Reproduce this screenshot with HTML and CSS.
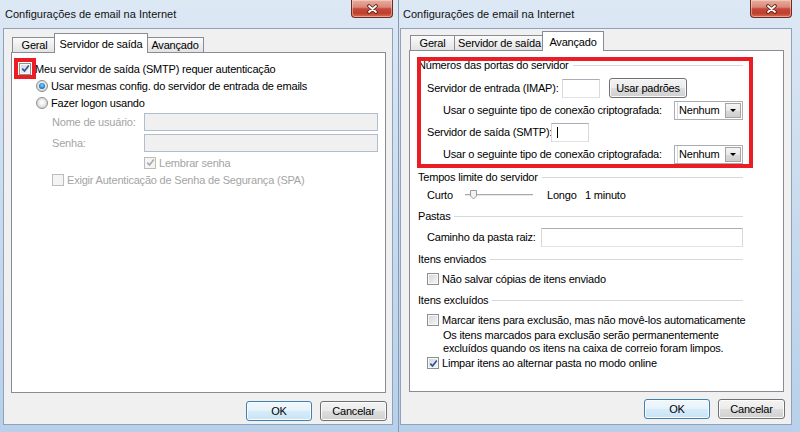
FILE: index.html
```html
<!DOCTYPE html>
<html>
<head>
    <meta charset="UTF-8">
    <title>Configurações de email na Internet</title>
    <link rel="stylesheet" href="styles.css">
</head>
<body>
<div class="desk">

    <!-- janela 1: aba Servidor de saída -->
    <div class="win win-a">
        <div class="titlebar">
            <span class="ttl">Configurações de email na Internet</span>
            <span class="close">
                <svg width="13" height="10" viewBox="0 0 13 10"><path d="M3 2 L10 8 M10 2 L3 8" stroke="#5a231c" stroke-width="3.6" stroke-linecap="round"/><path d="M3 2 L10 8 M10 2 L3 8" stroke="#fff" stroke-width="1.8" stroke-linecap="round"/></svg>
            </span>
        </div>
        <div class="win-body">
            <div class="tabs">
                <span class="tab t-geral">Geral</span>
                <span class="tab t-saida on">Servidor de saída</span>
                <span class="tab t-avanc">Avançado</span>
            </div>
            <div class="panel panel-out">
                <div class="opt">
                    <span class="chk chk-main">
                        <svg width="9" height="9" viewBox="0 0 9 9"><path d="M1.3 4.6 L3.5 7 L7.8 1.4" stroke="#2e4f9e" stroke-width="1.6" fill="none"/></svg>
                        <span class="mark"></span>
                    </span>
                    Meu servidor de saída (SMTP) requer autenticação
                </div>
                <div class="sub">
                    <div class="opt"><span class="radio on"></span>Usar mesmas config. do servidor de entrada de emails</div>
                    <div class="opt"><span class="radio"></span>Fazer logon usando</div>
                    <div class="login">
                        <div class="field"><span class="field-lbl">Nome de usuário:</span><span class="txt txt-off"></span></div>
                        <div class="field"><span class="field-lbl">Senha:</span><span class="txt txt-off"></span></div>
                        <div class="opt remember">
                            <span class="chk chk-off">
                                <svg width="9" height="9" viewBox="0 0 9 9"><path d="M1.3 4.6 L3.5 7 L7.8 1.4" stroke="#a9a9a9" stroke-width="1.6" fill="none"/></svg>
                            </span>
                            Lembrar senha
                        </div>
                        <div class="opt"><span class="chk chk-off"></span>Exigir Autenticação de Senha de Segurança (SPA)</div>
                    </div>
                </div>
            </div>
            <div class="actions">
                <span class="btn btn-ok">OK</span>
                <span class="btn btn-cancel">Cancelar</span>
            </div>
        </div>
    </div>

    <!-- janela 2: aba Avançado -->
    <div class="win win-b">
        <div class="titlebar">
            <span class="ttl">Configurações de email na Internet</span>
            <span class="close">
                <svg width="13" height="10" viewBox="0 0 13 10"><path d="M3 2 L10 8 M10 2 L3 8" stroke="#5a231c" stroke-width="3.6" stroke-linecap="round"/><path d="M3 2 L10 8 M10 2 L3 8" stroke="#fff" stroke-width="1.8" stroke-linecap="round"/></svg>
            </span>
        </div>
        <div class="win-body">
            <div class="tabs">
                <span class="tab t-geral">Geral</span>
                <span class="tab t-saida">Servidor de saída</span>
                <span class="tab t-avanc on">Avançado</span>
            </div>
            <div class="panel panel-adv">

                <div class="grp grp-ports">
                    <div class="mark"></div>
                    <div class="grp-hd">Números das portas do servidor</div>
                    <div class="grp-body">
                        <div class="fld">
                            <span class="w-imap">Servidor de entrada (IMAP):</span>
                            <span class="txt port"></span>
                            <span class="btn btn-def">Usar padrões</span>
                        </div>
                        <div class="fld indent">
                            <span>Usar o seguinte tipo de conexão criptografada:</span>
                            <span class="sel"><span class="sel-txt">Nenhum</span><span class="sel-btn"><i class="arrow"></i></span></span>
                        </div>
                        <div class="fld">
                            <span class="w-smtp">Servidor de saída (SMTP):</span>
                            <span class="txt port"><span class="caret"></span></span>
                        </div>
                        <div class="fld indent">
                            <span>Usar o seguinte tipo de conexão criptografada:</span>
                            <span class="sel"><span class="sel-txt">Nenhum</span><span class="sel-btn"><i class="arrow"></i></span></span>
                        </div>
                    </div>
                </div>

                <div class="grp grp-time">
                    <div class="grp-hd">Tempos limite do servidor</div>
                    <div class="grp-body">
                        <div class="fld slide">
                            <span class="w-short">Curto</span>
                            <svg class="track" width="70" height="12" viewBox="0 0 70 12">
                                <rect x="0" y="5" width="68" height="1" fill="#a9a9a9"/>
                                <rect x="0" y="6" width="68" height="1" fill="#e9e9e9"/>
                                <path d="M5.5 1.5 h6 v5.5 l-3 3 l-3 -3 z" fill="#f3f3f3" stroke="#9a9a9a"/>
                            </svg>
                            <span class="w-short">Longo</span>
                            <span>1 minuto</span>
                        </div>
                    </div>
                </div>

                <div class="grp">
                    <div class="grp-hd">Pastas</div>
                    <div class="grp-body">
                        <div class="fld">
                            <span class="w-root">Caminho da pasta raiz:</span>
                            <span class="txt grow"></span>
                        </div>
                    </div>
                </div>

                <div class="grp">
                    <div class="grp-hd">Itens enviados</div>
                    <div class="grp-body">
                        <div class="opt chk-row"><span class="chk"></span>Não salvar cópias de itens enviado</div>
                    </div>
                </div>

                <div class="grp">
                    <div class="grp-hd">Itens excluídos</div>
                    <div class="grp-body">
                        <div class="opt chk-row"><span class="chk"></span>Marcar itens para exclusão, mas não movê-los automaticamente</div>
                        <p class="desc">Os itens marcados para exclusão serão permanentemente<br>excluídos quando os itens na caixa de correio foram limpos.</p>
                        <div class="opt chk-row">
                            <span class="chk">
                                <svg width="9" height="9" viewBox="0 0 9 9"><path d="M1.3 4.6 L3.5 7 L7.8 1.4" stroke="#2e4f9e" stroke-width="1.6" fill="none"/></svg>
                            </span>
                            Limpar itens ao alternar pasta no modo online
                        </div>
                    </div>
                </div>

            </div>
            <div class="actions">
                <span class="btn btn-ok">OK</span>
                <span class="btn btn-cancel">Cancelar</span>
            </div>
        </div>
    </div>

</div>
</body>
</html>
```

FILE: styles.css
```css
* {box-sizing: border-box;}
body {margin: 0; width: 800px; height: 432px; overflow: hidden; background: linear-gradient(#dde8f5, #cadcee 45%, #b8d0ea); font-family: "Liberation Sans", Arial, sans-serif; font-size: 11px; color: #000; letter-spacing: -0.2px;}
.desk {display: flex; height: 432px;}

/* frame of each window */
.win {display: flex; flex-direction: column; height: 432px; padding-bottom: 7px;}
.win-a {width: 398px; padding-left: 3px; padding-right: 5px;}
.win-b {width: 402px; padding-left: 1px; padding-right: 8px; border-left: 1px solid #8799b0;}
.titlebar {height: 28px; display: flex; justify-content: space-between; align-items: flex-start; padding-left: 2px;}
.win-b .titlebar {padding-left: 3px;}
.ttl {line-height: 28px; letter-spacing: 0; color: #111;}
.close {width: 42px; height: 18px; display: flex; align-items: center; justify-content: center; border: 1px solid #6d2b22; border-top: 0; border-radius: 0 0 4px 4px; background: linear-gradient(#e9ae9f, #d8887a 42%, #c5483a 52%, #c03f2e 78%, #d6704f); box-shadow: inset 0 0 0 1px rgba(255, 232, 222, 0.45);}

.win-body {flex: 1; display: flex; flex-direction: column; background: #f0f0f0; border: 1px solid #8ea3bb;}
.win-a .win-body {padding: 4px 6px 3px 7px;}
.win-b .win-body {padding: 2px 7px 5px 8px;}

/* tabs */
.tabs {display: flex; align-items: flex-end; height: 19px; padding-left: 1px;}
.tab {height: 15px; display: flex; align-items: center; justify-content: center; border: 1px solid #898c95; border-bottom: 0; margin-right: -1px; background: linear-gradient(#fbfbfb, #efefef 50%, #e3e3e3); white-space: nowrap;}
.tab.on {height: 20px; margin: 0 -2px -1px -2px; background: #fff; position: relative; z-index: 1;}
.t-geral {width: 45px;}
.t-saida {width: 91px;}
.t-avanc {width: 58px;}
.t-saida.on {width: 94px;}
.t-avanc.on {width: 62px;}
.panel {flex: 1; background: #fff; border: 1px solid #898c95;}

/* buttons */
.actions {display: flex; justify-content: flex-end; gap: 8px; height: 20px; margin-right: -1px;}
.win-a .actions {margin-top: 8px;}
.win-b .actions {margin-top: 7px;}
.btn {height: 20px; display: flex; align-items: center; justify-content: center; border: 1px solid #707070; border-radius: 3px; background: linear-gradient(#f3f3f3, #ebebeb 50%, #dddddd 51%, #d0d0d0); box-shadow: inset 0 0 0 1px #fbfbfb;}
.btn-ok {width: 66px; border-color: #3f80b3; background: linear-gradient(#f1f8fd, #e5f2fb 50%, #d5ebf8 51%, #c9e4f6);}
.btn-cancel {width: 67px;}
.btn-def {width: 78px; margin-left: 9px;}

/* checkboxes and radios */
.opt {display: flex; align-items: center; height: 17px; white-space: nowrap;}
.chk {width: 12px; height: 12px; flex: none; margin-right: 3px; display: flex; align-items: center; justify-content: center; position: relative; border: 1px solid #8e8f8f; background: linear-gradient(135deg, #d2d6db, #f6f6f6); box-shadow: inset 0 0 0 1px #f8f8f8;}
.chk-main {margin-right: 4px;}
.chk-off {border-color: #bcbcbc; background: #f4f4f4; box-shadow: none;}
.radio {width: 12px; height: 12px; flex: none; margin-right: 3px; border-radius: 50%; border: 1px solid #8b8c8c; background: radial-gradient(circle at 50% 45%, #fdfdfd 15%, #dedede 60%, #c7c7c7); display: flex; align-items: center; justify-content: center;}
.radio.on::after {content: ""; width: 6px; height: 6px; border-radius: 50%; background: radial-gradient(circle at 50% 40%, #8fd6ff, #1f86c9 55%, #0b3f6d);}

/* red highlight boxes drawn over the controls */
.mark {position: absolute; border: 4px solid #ec1c24; pointer-events: none;}
.chk .mark {left: -6px; right: -6px; top: -6px; bottom: -5px;}
.grp-ports {position: relative;}
.grp-ports .mark {left: -1px; right: -10px; top: 1px; bottom: -3px; z-index: 2;}

/* text fields */
.txt {height: 19px; display: flex; align-items: center; background: #fff; border: 1px solid; border-color: #abadb3 #d6d9de #dfe3e8 #d6d9de;}
.txt-off {flex: 1; height: 18px; background: #f0f0f0; border-color: #afbdcf;}
.port {width: 38px;}
.grow {flex: 1;}
.caret {width: 1px; height: 11px; margin-left: 5px; background: #000;}

/* combobox */
.sel {width: 69px; height: 19px; margin-left: auto; display: flex; align-items: center; background: #fff; border: 1px solid #abadb3; box-shadow: inset 2px 0 0 #fff, inset 3px 0 0 #c9dcf0;}
.sel-txt {flex: 1; padding-left: 4px;}
.sel-btn {width: 16px; height: 15px; margin-right: 1px; display: flex; align-items: center; justify-content: center; border: 1px solid #a4a4a4; background: linear-gradient(#f5f5f5, #e9e9e9 50%, #dadada 51%, #cecece);}
.arrow {width: 0; height: 0; border-left: 3px solid transparent; border-right: 3px solid transparent; border-top: 3px solid #000;}

/* left panel: Servidor de saída */
.panel-out {padding: 7px 7px 0 7px;}
.sub {padding-left: 17px;}
.login {padding-left: 16px; color: #a4a4a4;}
.field {display: flex; align-items: center; height: 21px;}
.field-lbl {width: 92px; white-space: nowrap;}
.remember {padding-left: 92px; margin-top: 1px;}

/* right panel: Avançado */
.panel-adv {padding: 5px 40px 0 8px;}
.grp + .grp {margin-top: 3px;}
.grp-hd {display: flex; align-items: center; height: 18px; margin-bottom: 2px; white-space: nowrap;}
.grp-hd::after {content: ""; flex: 1; height: 1px; margin-left: 4px; background: #d3d9df;}
.grp-ports .grp-hd {margin-bottom: 3px;}
.grp-time .grp-hd {margin-bottom: 0;}
.grp-body {padding-left: 9px;}
.fld {display: flex; align-items: center; height: 20px; white-space: nowrap;}
.grp-ports .fld {height: 22px;}
.fld.slide {height: 18px;}
.indent {padding-left: 16px;}
.w-imap {width: 135px;}
.w-smtp {width: 124px;}
.w-root {width: 114px;}
.w-short {width: 38px;}
.track {margin-right: 12px;}
.chk-row {height: 18px;}
.desc {margin: 0; padding-left: 16px; line-height: 12.5px; white-space: nowrap;}
```
